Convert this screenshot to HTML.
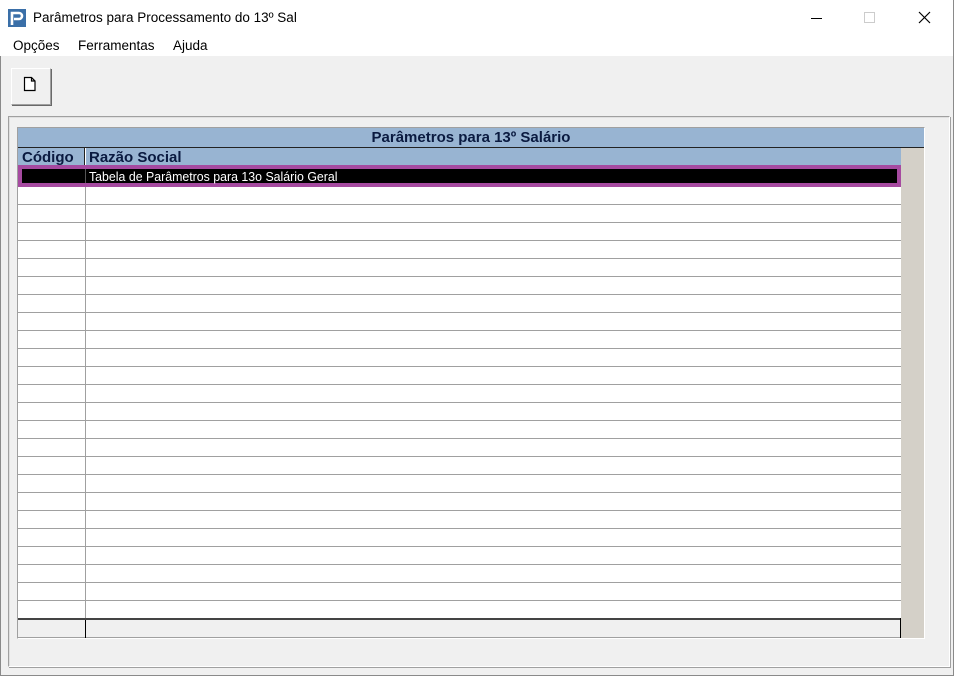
<!DOCTYPE html>
<html><head><meta charset="utf-8"><style>
*{margin:0;padding:0;box-sizing:border-box}
body{width:960px;height:679px;background:#fff;position:relative;overflow:hidden;font-family:"Liberation Sans",sans-serif;font-size:13px;color:#000}
.a{position:absolute}
</style></head><body>
<div class="a" style="left:0;top:0;width:954px;height:676px;border:1px solid #8a8a8a;border-top:none;background:#f0f0f0"></div>
<div class="a" style="left:0;top:0;width:953px;height:56px;background:#fff"></div>
<div class="a" style="left:953px;top:0;width:1px;height:676px;background:#8a8a8a"></div>
<svg class="a" style="left:8px;top:9px" width="18" height="18"><rect width="18" height="18" fill="#3a6fa8"/><path d="M4 16V4h7a3 3 0 0 1 0 6H6" stroke="#fff" stroke-width="2.6" fill="none"/></svg>
<div class="a" style="left:33px;top:10px;font-size:13.5px">Parâmetros para Processamento do 13º Sal</div>
<div class="a" style="left:811px;top:18px;width:11px;height:1px;background:#000"></div>
<div class="a" style="left:864px;top:12px;width:11px;height:11px;border:1px solid #ccc"></div>
<svg class="a" style="left:918px;top:11px" width="13" height="13"><path d="M1 1L12 12M12 1L1 12" stroke="#000" stroke-width="1.2"/></svg>
<div class="a" style="left:13px;top:38px;font-size:13.5px">Opções</div>
<div class="a" style="left:78px;top:38px;font-size:13.5px">Ferramentas</div>
<div class="a" style="left:173px;top:38px;font-size:13.5px">Ajuda</div>
<div class="a" style="left:11px;top:68px;width:40px;height:37px;border:1px solid;border-color:#fff #a0a0a0 #a0a0a0 #fff;box-shadow:1px 1px 0 #696969"></div>
<svg class="a" style="left:23px;top:76px" width="14" height="16"><path d="M1.5 1.5h7l3.5 3.5v9.5h-10.5z M8.5 1.5v3.5h3.5" fill="#fff" stroke="#000" stroke-width="1.2"/></svg>
<div class="a" style="left:8px;top:116px;width:942px;height:551px;border:1px solid;border-color:#a0a0a0 #fff #fff #a0a0a0;box-shadow:inset 1px 1px 0 #e0e0e0, 1px 1px 0 #a0a0a0"></div>
<div class="a" style="left:17px;top:127px;width:908px;height:512px;border:1px solid;border-color:#a0a0a0 #fff #fff #a0a0a0;background:#fff"></div>
<div class="a" style="left:18px;top:128px;width:906px;height:20px;background:#98b4d2;border-bottom:1px solid #222;text-align:center;font-weight:bold;line-height:20px;font-size:15px;color:#0a1a40">Parâmetros para 13º Salário</div>
<div class="a" style="left:901px;top:148px;width:23px;height:490px;background:#d4d0c8"></div>
<div class="a" style="left:18px;top:148px;width:67px;height:17px;background:#98b4d2;border-right:1px solid #222;font-weight:bold;font-size:15px;line-height:20px;padding-left:4px;color:#0a1a40;overflow:hidden">Código</div>
<div class="a" style="left:86px;top:148px;width:815px;height:17px;background:#98b4d2;font-weight:bold;font-size:15px;line-height:20px;padding-left:3px;color:#0a1a40;overflow:hidden">Razão Social</div>
<div id="rows"></div>
<div class="a" style="left:85px;top:186px;width:1px;height:432px;background:#a0a0a0"></div>
<div class="a" style="left:18px;top:165px;width:883px;height:22px;border:4px solid #a64aa0;background:#000"></div>
<div class="a" style="left:85px;top:169px;width:1px;height:14px;background:#555"></div>
<div class="a" style="left:89px;top:169px;color:#fff;font-size:13px;line-height:15px;transform:scaleX(0.95);transform-origin:0 0">Tabela de Parâmetros para 13o Salário Geral</div>
<div class="a" style="left:18px;top:618px;width:883px;height:2px;background:#444"></div>
<div class="a" style="left:18px;top:620px;width:67px;height:18px;background:#f0f0f0;border-bottom:1px solid #a0a0a0"></div>
<div class="a" style="left:85px;top:620px;width:1px;height:18px;background:#000"></div>
<div class="a" style="left:86px;top:620px;width:814px;height:18px;background:#f0f0f0;border-bottom:1px solid #a0a0a0"></div>
<div class="a" style="left:900px;top:618px;width:1px;height:20px;background:#000"></div>
<script>
var h='';for(var y=204;y<=600;y+=18){h+='<div class="a" style="left:18px;top:'+y+'px;width:883px;height:1px;background:#a0a0a0"></div>';}
document.getElementById('rows').innerHTML=h;
</script>
</body></html>
